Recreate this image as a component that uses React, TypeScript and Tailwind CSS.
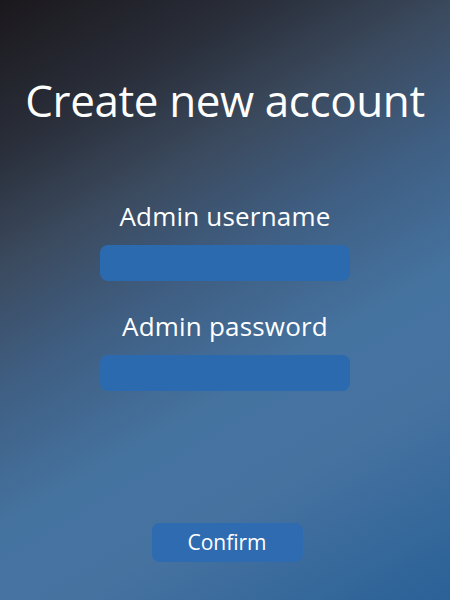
import React from 'react';

function App() {
	return (
		<div
			className="flex flex-col items-center w-[450px] h-[600px] text-white bg-[linear-gradient(150deg,#1b181c_0%,#2a2f3b_18%,#3b4a5e_31%,#3f5e82_45%,#4573a0_62%,#4672a0_75%,#2a6197_100%)]"
			style={{ fontFamily: '"Open Sans", "Noto Sans", sans-serif' }}
		>
			<h1 className="mt-[70px] text-[44px] leading-[60px] tracking-[-0.4px]">Create new account</h1>
			<form className="flex flex-col items-center mt-[66px] w-[250px]">
				<label htmlFor="username" className="text-[26px] leading-[40px] tracking-[0.2px]">Admin username</label>
				<input
					id="username"
					type="text"
					className="mt-[9px] w-[250px] h-[36px] rounded-lg bg-[#2b6aaf] outline-none px-3"
				/>
				<label htmlFor="password" className="mt-[25px] text-[26px] leading-[40px] tracking-[0.2px]">Admin password</label>
				<input
					id="password"
					type="password"
					className="mt-[9px] w-[250px] h-[36px] rounded-lg bg-[#2b6aaf] outline-none px-3"
				/>
				<button
					type="submit"
					className="mt-[132px] ml-[4px] w-[151px] h-[39px] rounded-lg bg-[#2e6bb0] text-[21px]"
				>
					Confirm
				</button>
			</form>
		</div>
	);
}

export default App;
